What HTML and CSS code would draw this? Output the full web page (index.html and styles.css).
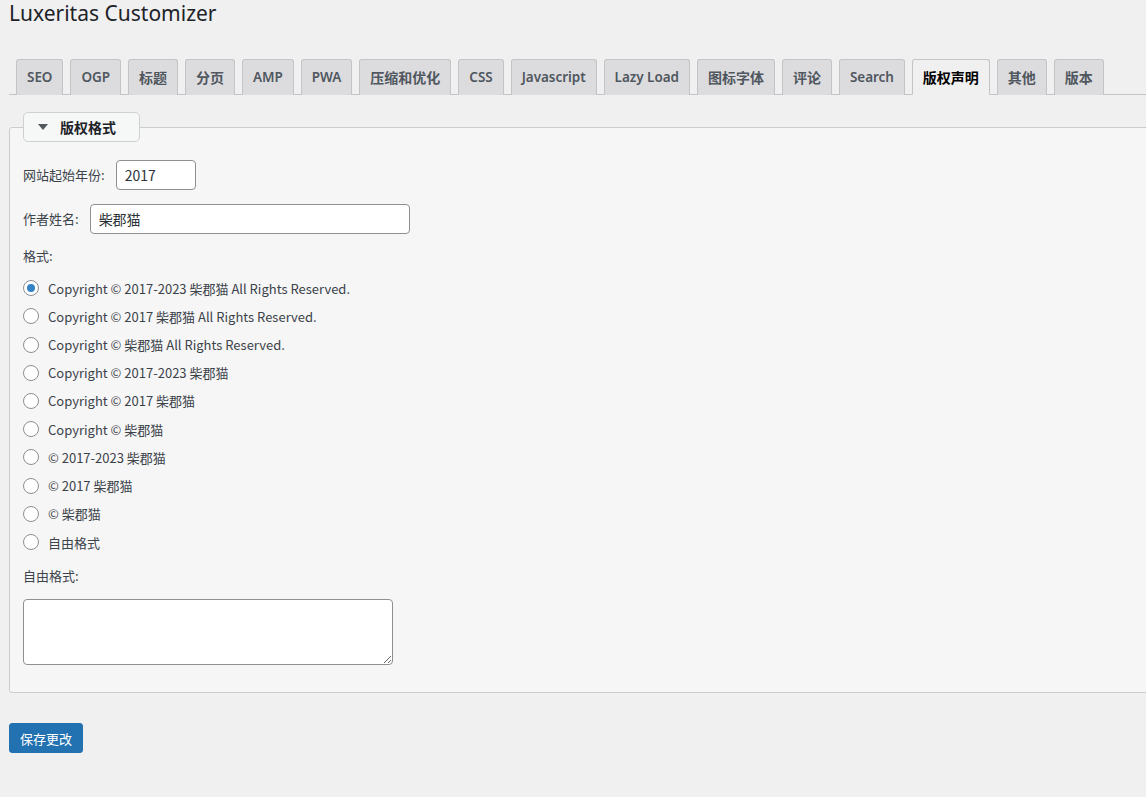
FILE: index.html
```html
<!DOCTYPE html>
<html lang="zh-CN">
<head>
<meta charset="utf-8">
<title>Luxeritas Customizer</title>
<link rel="stylesheet" href="styles.css">
</head>
<body>
<div class="wrap">
  <h1 class="title">Luxeritas Customizer</h1>
  <nav class="tabs">
    <a class="tab">SEO</a>
    <a class="tab">OGP</a>
    <a class="tab cjk">标题</a>
    <a class="tab cjk">分页</a>
    <a class="tab">AMP</a>
    <a class="tab">PWA</a>
    <a class="tab cjk">压缩和优化</a>
    <a class="tab">CSS</a>
    <a class="tab">Javascript</a>
    <a class="tab">Lazy Load</a>
    <a class="tab cjk">图标字体</a>
    <a class="tab cjk">评论</a>
    <a class="tab">Search</a>
    <a class="tab cjk active">版权声明</a>
    <a class="tab cjk">其他</a>
    <a class="tab cjk">版本</a>
  </nav>
  <form class="form">
    <fieldset class="box">
      <legend class="legend"><span class="caret"></span>版权格式</legend>
      <div class="row first">
        <label class="label">网站起始年份:</label>
        <input class="input year" type="text" value="2017">
      </div>
      <div class="row second">
        <label class="label">作者姓名:</label>
        <input class="input name" type="text" value="柴郡猫">
      </div>
      <p class="heading">格式:</p>
      <ul class="radios">
        <li class="opt"><span class="radio checked"></span>Copyright © 2017-2023 柴郡猫 All Rights Reserved.</li>
        <li class="opt"><span class="radio"></span>Copyright © 2017 柴郡猫 All Rights Reserved.</li>
        <li class="opt"><span class="radio"></span>Copyright © 柴郡猫 All Rights Reserved.</li>
        <li class="opt"><span class="radio"></span>Copyright © 2017-2023 柴郡猫</li>
        <li class="opt"><span class="radio"></span>Copyright © 2017 柴郡猫</li>
        <li class="opt"><span class="radio"></span>Copyright © 柴郡猫</li>
        <li class="opt"><span class="radio"></span>© 2017-2023 柴郡猫</li>
        <li class="opt"><span class="radio"></span>© 2017 柴郡猫</li>
        <li class="opt"><span class="radio"></span>© 柴郡猫</li>
        <li class="opt"><span class="radio"></span>自由格式</li>
      </ul>
      <p class="heading free">自由格式:</p>
      <textarea class="textarea"></textarea>
    </fieldset>
    <button class="save" type="button">保存更改</button>
  </form>
</div>
</body>
</html>
```
FILE: styles.css
```css
html, body {
  margin: 0;
  padding: 0;
  background: #f0f0f1;
  overflow: hidden;
}
body {
  font-family: "Noto Sans CJK SC", "Noto Sans", sans-serif;
  color: #3c434a;
  font-size: 13px;
}
.wrap {
  padding-left: 9px;
}
.title {
  margin: 0;
  font-size: 21px;
  font-weight: 400;
  line-height: 27px;
  color: #1d2327;
  font-family: "Noto Sans", "Noto Sans CJK SC", sans-serif;
}
.tabs {
  display: flex;
  gap: 7px;
  margin-top: 32px;
  padding-left: 7px;
  border-bottom: 1px solid #c3c4c7;
  margin-right: -40px;
  height: 35px;
}
.tab {
  box-sizing: border-box;
  height: 36px;
  padding: 5px 10px 0;
  border: 1px solid #c3c4c7;
  border-bottom: none;
  border-radius: 3px 3px 0 0;
  background: #dcdcde;
  color: #50575e;
  font-family: "Noto Sans", "Noto Sans CJK SC", sans-serif;
  font-size: 13.5px;
  font-weight: 600;
  letter-spacing: -0.05px;
  line-height: 24px;
  white-space: nowrap;
}
.tab.cjk {
  font-family: "Noto Sans CJK SC", "Noto Sans", sans-serif;
  font-size: 14px;
  font-weight: 700;
  letter-spacing: 0;
}
.tab.active {
  background: #f0f0f1;
  color: #000;
  border-bottom: 1px solid #f0f0f1;
}
.form {
  margin: 0;
  padding-top: 17px;
}
.box {
  margin: 0 -40px 0 0;
  padding: 0 13px 27px 13px;
  border: 1px solid #ccc;
  border-radius: 3px;
  background: #f6f6f6;
  min-width: 0;
}
.legend {
  box-sizing: border-box;
  height: 30px;
  width: 117px;
  margin-left: 0;
  padding: 0 0 0 14px;
  border: 1px solid #cfd0d2;
  border-radius: 5px;
  background: #f6f7f7;
  font-size: 14px;
  font-weight: 700;
  color: #1d2327;
  line-height: 28px;
  display: flex;
  align-items: center;
}
.caret {
  width: 0;
  height: 0;
  border-left: 5px solid transparent;
  border-right: 5px solid transparent;
  border-top: 6px solid #50575e;
  margin-right: 12px;
}
.row {
  display: flex;
  align-items: center;
  gap: 11px;
}
.row.first {
  margin-top: 18px;
}
.row.second {
  margin-top: 14px;
}
.label {
  line-height: 20px;
}
.input {
  box-sizing: border-box;
  height: 30px;
  border: 1px solid #8c8f94;
  border-radius: 4px;
  background: #fff;
  padding: 0 8px;
  font-family: "Noto Sans CJK SC", "Noto Sans", sans-serif;
  font-size: 14px;
  color: #2c3338;
}
.year {
  width: 80px;
}
.name {
  width: 320px;
}
.heading {
  margin: 12px 0 0;
  line-height: 20px;
}
.heading.free {
  margin-top: 10px;
}
.radios {
  list-style: none;
  margin: 8px 0 0;
  padding: 0;
}
.opt {
  height: 28.22px;
  display: flex;
  align-items: center;
  gap: 9px;
  white-space: nowrap;
}
.radio {
  box-sizing: border-box;
  width: 16px;
  height: 16px;
  border: 1px solid #8c8f94;
  border-radius: 50%;
  background: #fff;
  display: flex;
  align-items: center;
  justify-content: center;
  flex: none;
}
.radio.checked::after {
  content: "";
  width: 8px;
  height: 8px;
  border-radius: 50%;
  background: #3582c4;
}
.textarea {
  display: block;
  box-sizing: border-box;
  margin-top: 13px;
  width: 370px;
  height: 66px;
  border: 1px solid #8c8f94;
  border-radius: 4px;
  background: #fff;
}
.save {
  display: block;
  margin-top: 30px;
  box-sizing: border-box;
  width: 74px;
  height: 30px;
  border: 1px solid #2271b1;
  border-radius: 3px;
  background: #2271b1;
  color: #fff;
  font-family: "Noto Sans CJK SC", "Noto Sans", sans-serif;
  font-size: 13px;
  padding: 0;
}
```
